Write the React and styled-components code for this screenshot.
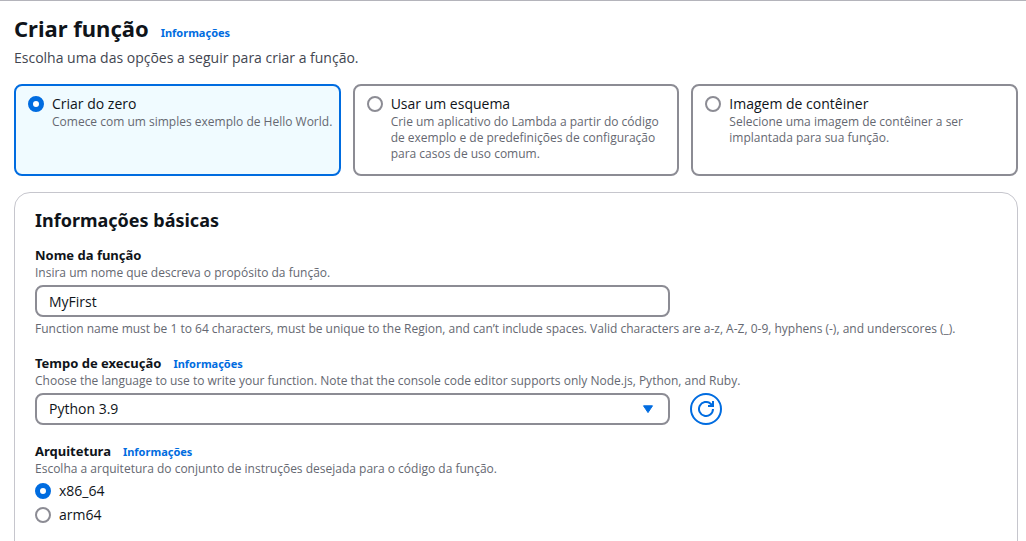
import React, { useState } from "react";
import styled, { createGlobalStyle } from "styled-components";

const blue = "#006ce0";
const grey = "#8c8c94";
const strongFont = `"Noto Sans", "Open Sans", sans-serif`;

const GlobalStyle = createGlobalStyle`
  *, *::before, *::after { box-sizing: border-box; }
  body {
    margin: 0;
    background: #fff;
    color: #0f141a;
    font-family: "Open Sans", "Noto Sans", sans-serif;
    font-size: 14px;
    line-height: 20px;
  }
`;

const Page = styled.main`
  border-top: 1px solid #b4b4bb;
  padding: 12px 8px 0 14px;
`;

const TitleRow = styled.div`
  display: flex;
  align-items: baseline;
  gap: 12px;
`;

const Title = styled.h1`
  margin: 0;
  font-family: ${strongFont};
  font-size: 22px;
  line-height: 30px;
  font-weight: 700;
`;

const InfoLink = styled.a`
  color: ${blue};
  font-family: ${strongFont};
  font-size: 11px;
  line-height: 16px;
  font-weight: 700;
  text-decoration: none;
`;

const Intro = styled.p`
  margin: 5px 0 16px;
  color: #424650;
`;

const Tiles = styled.div`
  display: grid;
  grid-template-columns: repeat(3, minmax(0, 1fr));
  gap: 12px;
`;

const Tile = styled.label`
  display: flex;
  gap: 8px;
  padding: 8px 4px 12px 12px;
  border: 2px solid ${(p) => (p.$selected ? blue : grey)};
  border-radius: 8px;
  background: ${(p) => (p.$selected ? "#f0fbff" : "#fff")};
`;

const Radio = styled.input.attrs({ type: "radio" })`
  appearance: none;
  flex: none;
  width: 16px;
  height: 16px;
  margin: 2px 0;
  border: 2px solid ${grey};
  border-radius: 50%;
  background: #fff;
  &:checked {
    border: 5px solid ${blue};
  }
`;

const TileText = styled.span`
  display: flex;
  flex-direction: column;
`;

const Hint = styled.span`
  display: block;
  color: #656871;
  font-size: 12px;
  line-height: 16px;
`;

const Constraint = styled(Hint)`
  margin-top: 4px;
`;

const Panel = styled.section`
  margin-top: 16px;
  padding: 15px 20px 40px;
  border: 1px solid #c6c6cd;
  border-radius: 16px;
`;

const PanelTitle = styled.h2`
  margin: 0 0 13px;
  font-family: ${strongFont};
  font-size: 18px;
  line-height: 24px;
  font-weight: 700;
`;

const Fields = styled.div`
  display: flex;
  flex-direction: column;
  gap: 16px;
`;

const LabelRow = styled.div`
  display: flex;
  align-items: baseline;
  gap: 12px;
`;

const Label = styled.label`
  font-family: ${strongFont};
  font-size: 13px;
  font-weight: 700;
`;

const ControlGrid = styled.div`
  display: grid;
  grid-template-columns: repeat(12, minmax(0, 1fr));
  column-gap: 20px;
  margin-top: 4px;
`;

const ControlCell = styled.div`
  position: relative;
  grid-column: span 8;
`;

const controlStyle = `
  display: block;
  width: 100%;
  height: 32px;
  padding: 0 12px;
  border: 2px solid ${grey};
  border-radius: 8px;
  background: #fff;
  color: #0f141a;
  font: inherit;
`;

const TextInput = styled.input`${controlStyle}`;

const Select = styled.select`
  ${controlStyle}
  appearance: none;
`;

const Caret = styled.svg`
  position: absolute;
  top: 12px;
  right: 16px;
  pointer-events: none;
`;

const RefreshButton = styled.button`
  display: flex;
  align-items: center;
  justify-content: center;
  width: 32px;
  height: 32px;
  padding: 0;
  border: 2px solid ${blue};
  border-radius: 50%;
  background: #fff;
  color: ${blue};
`;

const RadioList = styled.div`
  display: flex;
  flex-direction: column;
  gap: 4px;
  margin-top: 4px;
`;

const RadioLabel = styled.label`
  display: flex;
  gap: 8px;
`;

const methods = [
  ["Criar do zero", "Comece com um simples exemplo de Hello World."],
  [
    "Usar um esquema",
    "Crie um aplicativo do Lambda a partir do código de exemplo e de predefinições de configuração para casos de uso comum.",
  ],
  [
    "Imagem de contêiner",
    "Selecione uma imagem de contêiner a ser implantada para sua função.",
  ],
];

export default function App() {
  const [method, setMethod] = useState(0);
  const [name, setName] = useState("MyFirst");
  const [arch, setArch] = useState("x86_64");

  return (
    <>
      <GlobalStyle />
      <Page>
        <TitleRow>
          <Title>Criar função</Title>
          <InfoLink href="#criar">Informações</InfoLink>
        </TitleRow>
        <Intro>Escolha uma das opções a seguir para criar a função.</Intro>
        <Tiles role="radiogroup" aria-label="Criar função">
          {methods.map(([title, text], i) => (
            <Tile key={title} $selected={method === i}>
              <Radio name="method" checked={method === i} onChange={() => setMethod(i)} />
              <TileText>
                <span>{title}</span>
                <Hint>{text}</Hint>
              </TileText>
            </Tile>
          ))}
        </Tiles>
        <Panel>
          <PanelTitle>Informações básicas</PanelTitle>
          <Fields>
            <div>
              <LabelRow>
                <Label htmlFor="name">Nome da função</Label>
              </LabelRow>
              <Hint>Insira um nome que descreva o propósito da função.</Hint>
              <ControlGrid>
                <ControlCell>
                  <TextInput id="name" type="text" value={name} onChange={(e) => setName(e.target.value)} />
                </ControlCell>
              </ControlGrid>
              <Constraint>
                Function name must be 1 to 64 characters, must be unique to the Region, and can’t include spaces. Valid
                characters are a-z, A-Z, 0-9, hyphens (-), and underscores (_).
              </Constraint>
            </div>
            <div>
              <LabelRow>
                <Label htmlFor="runtime">Tempo de execução</Label>
                <InfoLink href="#runtime-info">Informações</InfoLink>
              </LabelRow>
              <Hint>
                Choose the language to use to write your function. Note that the console code editor supports only
                Node.js, Python, and Ruby.
              </Hint>
              <ControlGrid>
                <ControlCell>
                  <Select id="runtime">
                    <option>Python 3.9</option>
                  </Select>
                  <Caret width="12" height="9" viewBox="0 0 12 9" aria-hidden="true">
                    <path d="M1.5 .8h9L6 7.6z" fill={blue} stroke={blue} strokeLinejoin="round" />
                  </Caret>
                </ControlCell>
                <RefreshButton type="button" aria-label="Atualizar">
                  <svg width="16" height="16" viewBox="0 0 16 16" fill="none" stroke="currentColor" strokeWidth="2" aria-hidden="true">
                    <path d="M15 8a7 7 0 1 1-2.4-5.3L15 5" />
                    <path d="M10 5h5V0" />
                  </svg>
                </RefreshButton>
              </ControlGrid>
            </div>
            <div role="radiogroup" aria-labelledby="arch-label">
              <LabelRow>
                <Label as="span" id="arch-label">Arquitetura</Label>
                <InfoLink href="#arch-info">Informações</InfoLink>
              </LabelRow>
              <Hint>Escolha a arquitetura do conjunto de instruções desejada para o código da função.</Hint>
              <RadioList>
                {["x86_64", "arm64"].map((value) => (
                  <RadioLabel key={value}>
                    <Radio name="arch" checked={arch === value} onChange={() => setArch(value)} />
                    {value}
                  </RadioLabel>
                ))}
              </RadioList>
            </div>
          </Fields>
        </Panel>
      </Page>
    </>
  );
}
